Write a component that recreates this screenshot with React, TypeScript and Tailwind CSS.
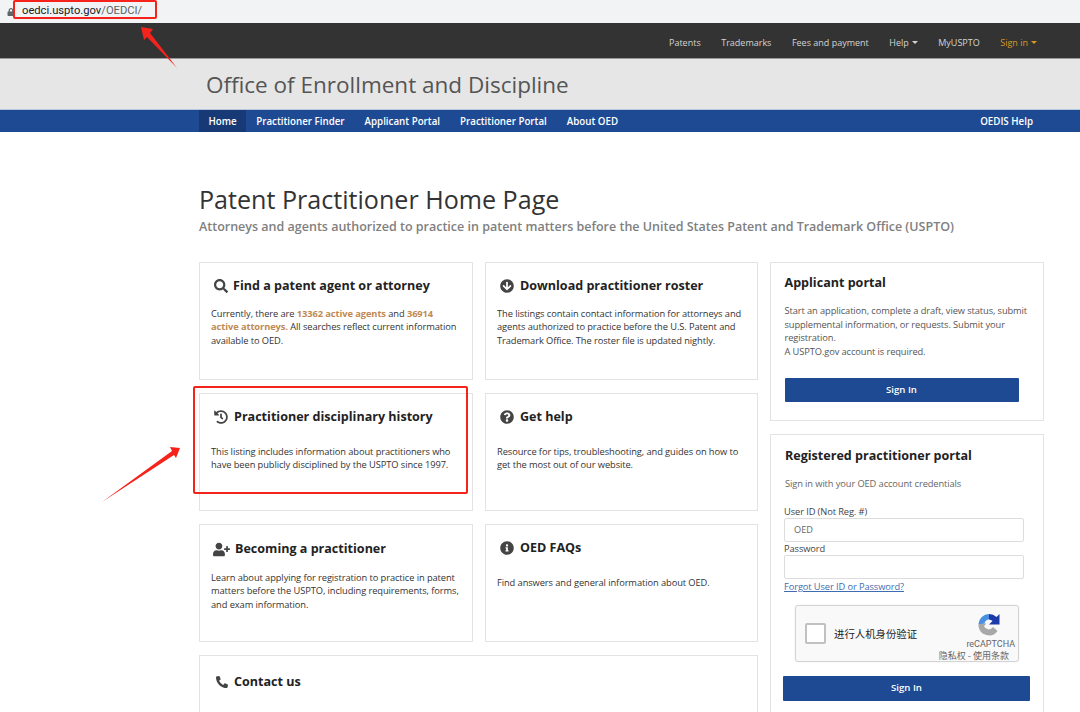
import React from "react";
import { FaSearch, FaHistory, FaArrowCircleDown, FaQuestionCircle, FaUserPlus, FaInfoCircle, FaPhoneAlt, FaLock } from "react-icons/fa";

function Card({ icon, title, gap = "gap-[6px]", top = "pt-[13px]", children }: { icon: React.ReactNode; title: string; gap?: string; top?: string; children?: React.ReactNode }) {
  return (
    <div className={`h-[118px] border border-[#e3e3e3] bg-white px-[11px] ${top}`}>
      <h3 className={`flex h-[20px] items-center ${gap} text-[12.55px] leading-[20px] font-bold text-[#222]`}>{icon}<span>{title}</span></h3>
      {children}
    </div>
  );
}

const body = "text-[9.3px] leading-[13.4px] tracking-[-0.08px] text-[#333]";

export default function App() {
  return (
    <div className="relative h-[712px] w-[1080px] overflow-hidden bg-white font-['Open_Sans','Noto_Sans',sans-serif]">
      {/* Browser address bar */}
      <div className="flex h-[23px] items-center bg-[#f1f3f4] pl-[7px]">
        <FaLock className="text-[8px] text-[#5f6368]" />
        <span className="ml-[7px] font-['Roboto',sans-serif] text-[11.2px] text-[#202124]">oedci.uspto.gov<span className="text-[#5f6368]">/OEDCI/</span></span>
      </div>

      {/* Top dark bar */}
      <div className="flex h-[36px] items-center justify-end gap-[20.5px] border-b border-[#999] bg-[#333] pr-[43px] pt-[4px] text-[9px] text-[#d4d4d4]">
        <span>Patents</span>
        <span>Trademarks</span>
        <span>Fees and payment</span>
        <span className="flex items-center gap-[3px]">Help<i className="h-0 w-0 border-x-[3px] border-t-[3px] border-x-transparent border-t-[#d4d4d4]" /></span>
        <span>MyUSPTO</span>
        <span className="flex items-center gap-[3px] text-[#d89a1e]">Sign in<i className="h-0 w-0 border-x-[3px] border-t-[3px] border-x-transparent border-t-[#d89a1e]" /></span>
      </div>

      {/* Title band */}
      <div className="flex h-[50px] items-center bg-[#e6e6e6] pl-[206px] pt-[2px] text-[22.5px] text-[#555]">Office of Enrollment and Discipline</div>

      {/* Blue nav */}
      <div className="flex h-[23px] items-stretch border-t border-[#b9c6dc] bg-[#1e4a94] pl-[199px] pr-[47px] text-[9.75px] font-semibold text-white">
        <span className="flex items-center bg-[#173a76] px-[9.5px] pt-[3px]">Home</span>
        <span className="ml-[10px] flex items-center pt-[3px]">Practitioner Finder</span>
        <span className="ml-[20px] flex items-center pt-[3px]">Applicant Portal</span>
        <span className="ml-[20px] flex items-center pt-[3px]">Practitioner Portal</span>
        <span className="ml-[20px] flex items-center pt-[3px]">About OED</span>
        <span className="ml-auto flex items-center pt-[3px]">OEDIS Help</span>
      </div>

      {/* Main */}
      <div className="ml-[199px] w-[845px] pt-[49px]">
        <h1 className="h-[36px] text-[25.1px] leading-[36px] text-[#333]">Patent Practitioner Home Page</h1>
        <p className="h-[20px] text-[12.5px] leading-[20px] font-semibold text-[#808080]">Attorneys and agents authorized to practice in patent matters before the United States Patent and Trademark Office (USPTO)</p>

        <div className="mt-[25px] grid grid-cols-[559px_274px] gap-x-[12px]">
          <div className="grid grid-cols-[274px_273px] gap-x-[12px] gap-y-[13px] content-start">
            <Card icon={<FaSearch className="ml-[3px] text-[14px] text-[#444]" />} title="Find a patent agent or attorney" gap="gap-[5px]">
              <p className={`mt-[11px] ${body}`}>Currently, there are <b className="font-bold text-[#c08a52]">13362 active agents</b> and <b className="font-bold text-[#c08a52]">36914<br />active attorneys.</b> All searches reflect current information<br />available to OED.</p>
            </Card>
            <Card icon={<FaArrowCircleDown className="ml-[3px] text-[14px] text-[#444]" />} title="Download practitioner roster">
              <p className={`mt-[11px] ${body}`}>The listings contain contact information for attorneys and agents authorized to practice before the U.S. Patent and Trademark Office. The roster file is updated nightly.</p>
            </Card>
            <Card icon={<FaHistory className="ml-[3px] text-[14px] text-[#444]" />} title="Practitioner disciplinary history">
              <p className={`mt-[18px] ${body}`}>This listing includes information about practitioners who have been publicly disciplined by the USPTO since 1997.</p>
            </Card>
            <Card icon={<FaQuestionCircle className="ml-[3px] text-[14px] text-[#444]" />} title="Get help">
              <p className={`mt-[18px] ${body}`}>Resource for tips, troubleshooting, and guides on how to get the most out of our website.</p>
            </Card>
            <Card icon={<FaUserPlus className="ml-[2px] text-[17px] text-[#444]" />} title="Becoming a practitioner" gap="gap-[5px]" top="pt-[14px]">
              <p className={`mt-[12px] ${body}`}>Learn about applying for registration to practice in patent matters before the USPTO, including requirements, forms, and exam information.</p>
            </Card>
            <Card icon={<FaInfoCircle className="ml-[3px] text-[14px] text-[#444]" />} title="OED FAQs">
              <p className={`mt-[18px] ${body}`}>Find answers and general information about OED.</p>
            </Card>
            <div className="col-span-2 h-[100px] border border-[#e3e3e3] bg-white pl-[16px] pt-[16px]">
              <h3 className="flex h-[20px] items-center gap-[6px] text-[12.55px] font-bold text-[#222]"><FaPhoneAlt className="text-[12px] text-[#444]" />Contact us</h3>
            </div>
          </div>

          <div className="flex flex-col gap-[13px]">
            <div className="h-[159px] border border-[#e3e3e3] pl-[13.5px] pt-[10px]">
              <h3 className="h-[20px] text-[12.55px] leading-[20px] font-bold text-[#222]">Applicant portal</h3>
              <p className="mt-[11px] w-[246px] text-[9.3px] leading-[13.5px] tracking-[-0.1px] text-[#555]">Start an application, complete a draft, view status, submit supplemental information, or requests. Submit your registration.<br />A USPTO.gov account is required.</p>
              <button className="mt-[20px] h-[24px] w-[234px] rounded-[1px] bg-[#1e4a94] text-[9.6px] font-semibold text-white">Sign In</button>
            </div>
            <div className="h-[300px] border border-[#e3e3e3] pl-[13px] pt-[11px]">
              <h3 className="ml-px h-[20px] text-[12.55px] leading-[20px] font-bold text-[#222]">Registered practitioner portal</h3>
              <p className="mt-[11px] ml-px text-[9.3px] leading-[13px] tracking-[-0.1px] text-[#666]">Sign in with your OED account credentials</p>
              <div className="mt-[16px] text-[9.3px] leading-[12px] tracking-[-0.1px] text-[#444]">User ID (Not Reg. #)</div>
              <div className="flex h-[24px] w-[240px] items-center rounded-[2px] border border-[#ddd] pl-[9px] text-[9.2px] text-[#666]">OED</div>
              <div className="text-[9.3px] leading-[13px] tracking-[-0.1px] text-[#444]">Password</div>
              <div className="h-[24px] w-[240px] rounded-[2px] border border-[#ddd]" />
              <div className="mt-[1px] text-[9.3px] leading-[13px] tracking-[-0.1px] text-[#3f6cb0] underline">Forgot User ID or Password?</div>
              <div className="relative ml-[11px] mt-[12px] flex h-[57px] w-[224px] items-center rounded-[3px] border border-[#d3d3d3] bg-[#f9f9f9] pl-[9px] shadow-[0_0_2px_rgba(0,0,0,0.08)]">
                <div className="h-[21px] w-[21px] rounded-[2px] border-2 border-[#c1c1c1] bg-white" />
                <span className="ml-[8px] font-['Noto_Sans_CJK_SC',sans-serif] text-[10.4px] text-[#222]">进行人机身份验证</span>
                <svg viewBox="0 0 24 24" className="absolute left-[181px] top-[7px] h-[24px] w-[24px]">
                  <path d="M1.5 13 A10.5 10.5 0 0 0 20.5 18 L16 14 A5 5 0 0 1 7 13 L9.5 10.5 L1.5 10.5 Z" fill="#a8a8a8" />
                  <path d="M1.5 11 A10.5 10.5 0 0 1 12 1 V6.5 A5 5 0 0 0 7.5 10.5 L4 11 Z" fill="#4a90e2" />
                  <path d="M12 1 A10.5 10.5 0 0 1 19.5 4 L22.5 1 V11.5 H12 L15.5 8 A5 5 0 0 0 12 6.5 Z" fill="#1c3aa9" />
                </svg>
                <span className="absolute right-[3px] top-[33px] font-['Roboto',sans-serif] text-[9px] leading-[10px] text-[#666]">reCAPTCHA</span>
                <span className="absolute right-[9px] top-[44px] font-['Noto_Sans_CJK_SC',sans-serif] text-[9px] leading-[11px] text-[#666]">隐私权 - 使用条款</span>
              </div>
              <button className="mt-[14px] -ml-px h-[25px] w-[247px] rounded-[1px] bg-[#1e4a94] text-[9.6px] font-semibold text-white">Sign In</button>
            </div>
          </div>
        </div>
      </div>

      {/* Annotations */}
      <div className="absolute left-[13px] top-0 h-[19px] w-[144px] rounded-[2px] border-2 border-[#f5231c]" />
      <div className="absolute left-[193px] top-[386px] h-[108px] w-[275px] rounded-[2px] border-2 border-[#f5231c]" />
      <svg className="pointer-events-none absolute left-0 top-0" width="1080" height="712">
        <polygon points="141,27 153,29 150,33 177,68 147,37 144,40" fill="#f5231c" />
        <polygon points="180,448 170,447 172,451 102,502 174,455 176,458" fill="#f5231c" />
      </svg>
    </div>
  );
}
